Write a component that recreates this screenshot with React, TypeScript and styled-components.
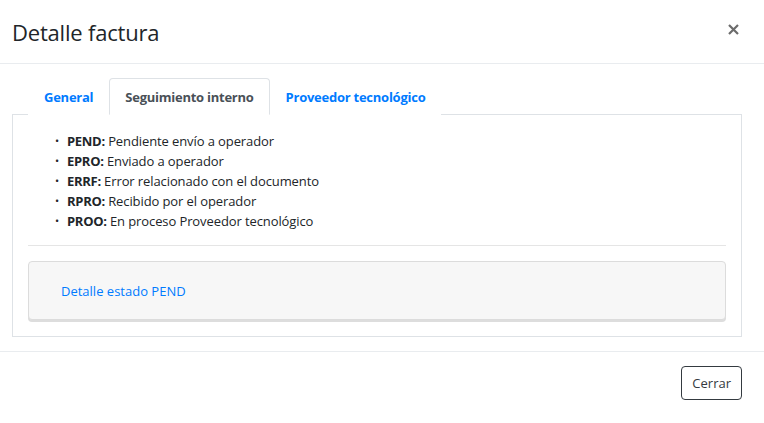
import React from 'react';
import styled, { createGlobalStyle } from 'styled-components';

const GlobalStyle = createGlobalStyle`
  html, body {
    margin: 0;
    padding: 0;
    background: #ffffff;
  }
  body {
    font-family: "Segoe UI", "Open Sans", "Noto Sans", sans-serif;
    color: #212529;
  }
`;

const Modal = styled.div`
  width: 764px;
  height: 423px;
  background: #fff;
  display: flex;
  flex-direction: column;
`;

const Header = styled.div`
  height: 64px;
  box-sizing: border-box;
  display: flex;
  align-items: center;
  justify-content: space-between;
  padding: 0 23px 0 12px;
  border-bottom: 1px solid #e9ecef;
`;

const Title = styled.h5`
  margin: 0;
  font-size: 22px;
  font-weight: 400;
  color: #212529;
  letter-spacing: -0.2px;
`;

const CloseButton = styled.button`
  border: none;
  background: none;
  padding: 0;
  width: 16px;
  height: 16px;
  display: flex;
  align-items: center;
  justify-content: center;
  cursor: pointer;
  margin-top: -4px;
`;

const Body = styled.div`
  padding: 14px 22px 14px 12px;
  border-bottom: 1px solid #e9ecef;
`;

const Tabs = styled.ul`
  list-style: none;
  margin: 0;
  padding: 0 0 0 16px;
  display: flex;
  border-bottom: 1px solid #dee2e6;
`;

const Tab = styled.li<{ active?: boolean }>`
  height: 37px;
  box-sizing: border-box;
  margin-bottom: -1px;
  padding: 0 15px;
  display: flex;
  align-items: center;
  font-size: 13px;
  font-weight: 700;
  letter-spacing: -0.25px;
  color: ${p => (p.active ? '#495057' : '#007bff')};
  background: #fff;
  border: 1px solid ${p => (p.active ? '#dee2e6' : 'transparent')};
  border-bottom-color: ${p => (p.active ? '#fff' : 'transparent')};
  border-radius: 4px 4px 0 0;
  cursor: pointer;
`;

const Panel = styled.div`
  border: 1px solid #dee2e6;
  border-top: none;
  padding: 16px 15px 16px 15px;
`;

const StatusList = styled.ul`
  margin: 0;
  padding: 0 0 0 39px;
  font-size: 13px;
  line-height: 20px;
  list-style: none;
  letter-spacing: -0.1px;
`;

const StatusItem = styled.li`
  position: relative;
  &::before {
    content: '•';
    position: absolute;
    left: -12px;
    font-size: 11px;
  }
  b {
    font-weight: 700;
    letter-spacing: -0.3px;
  }
`;

const Divider = styled.hr`
  margin: 14px 0 15px;
  border: none;
  border-top: 1px solid #e5e5e5;
`;

const DetailCard = styled.div`
  height: 59px;
  box-sizing: border-box;
  background: #f7f7f7;
  border: 1px solid #dcdcdc;
  border-radius: 4px;
  box-shadow: 0 2px 0 #dddddd;
  display: flex;
  align-items: center;
  padding: 0 32px;
`;

const DetailLink = styled.a`
  color: #007bff;
  font-size: 13px;
  text-decoration: none;
  cursor: pointer;
`;

const Footer = styled.div`
  display: flex;
  justify-content: flex-end;
  padding: 14px 22px 0 12px;
`;

const OutlineButton = styled.button`
  height: 34px;
  padding: 0 10px;
  font-family: inherit;
  font-size: 13px;
  color: #343a40;
  background: #fff;
  border: 1px solid #343a40;
  border-radius: 4px;
  cursor: pointer;
`;

const statuses = [
  { code: 'PEND', label: 'Pendiente envío a operador' },
  { code: 'EPRO', label: 'Enviado a operador' },
  { code: 'ERRF', label: 'Error relacionado con el documento' },
  { code: 'RPRO', label: 'Recibido por el operador' },
  { code: 'PROO', label: 'En proceso Proveedor tecnológico' },
];

export default function App() {
  return (
    <>
      <GlobalStyle />
      <Modal>
        <Header>
          <Title>Detalle factura</Title>
          <CloseButton aria-label="Close">
            <svg width="11" height="11" viewBox="0 0 11 11">
              <path d="M1 1L10 10M10 1L1 10" stroke="#6c6c6c" strokeWidth="2.2" strokeLinecap="butt" />
            </svg>
          </CloseButton>
        </Header>
        <Body>
          <Tabs>
            <Tab>General</Tab>
            <Tab active>Seguimiento interno</Tab>
            <Tab>Proveedor tecnológico</Tab>
          </Tabs>
          <Panel>
            <StatusList>
              {statuses.map(s => (
                <StatusItem key={s.code}>
                  <b>{s.code}:</b> {s.label}
                </StatusItem>
              ))}
            </StatusList>
            <Divider />
            <DetailCard>
              <DetailLink>Detalle estado PEND</DetailLink>
            </DetailCard>
          </Panel>
        </Body>
        <Footer>
          <OutlineButton>Cerrar</OutlineButton>
        </Footer>
      </Modal>
    </>
  );
}
